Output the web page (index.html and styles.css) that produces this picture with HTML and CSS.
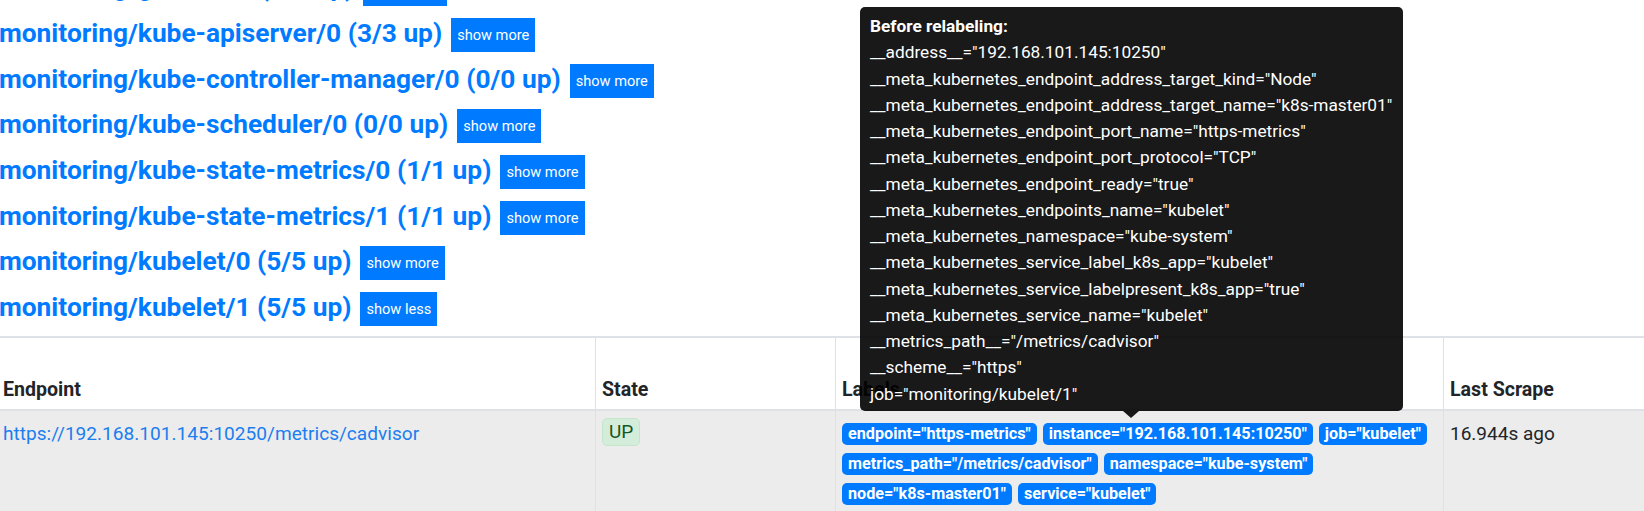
FILE: index.html
```html
<!DOCTYPE html>
<html lang="en">
<head>
<meta charset="utf-8">
<title>Targets</title>
<link rel="stylesheet" href="styles.css">
</head>
<body>
<div class="page">
  <div class="pools">
    <h3 class="pool"><a class="pool-link" href="#grafana">monitoring/grafana/0 (1/1 up)</a><button class="toggle">show more</button></h3>
    <h3 class="pool"><a class="pool-link" href="#apiserver">monitoring/kube-apiserver/0 (3/3 up)</a><button class="toggle">show more</button></h3>
    <h3 class="pool"><a class="pool-link" href="#cm">monitoring/kube-controller-manager/0 (0/0 up)</a><button class="toggle">show more</button></h3>
    <h3 class="pool"><a class="pool-link" href="#sched">monitoring/kube-scheduler/0 (0/0 up)</a><button class="toggle">show more</button></h3>
    <h3 class="pool"><a class="pool-link" href="#ksm0">monitoring/kube-state-metrics/0 (1/1 up)</a><button class="toggle">show more</button></h3>
    <h3 class="pool"><a class="pool-link" href="#ksm1">monitoring/kube-state-metrics/1 (1/1 up)</a><button class="toggle">show more</button></h3>
    <h3 class="pool"><a class="pool-link" href="#kubelet0">monitoring/kubelet/0 (5/5 up)</a><button class="toggle">show more</button></h3>
    <h3 class="pool"><a class="pool-link" href="#kubelet1">monitoring/kubelet/1 (5/5 up)</a><button class="toggle">show less</button></h3>
  </div>

  <div class="targets">
    <div class="cell th">Endpoint</div>
    <div class="cell th">State</div>
    <div class="cell th">Labels</div>
    <div class="cell th">Last Scrape</div>
    <div class="cell th">Scrape Duration</div>
    <div class="cell th">Error</div>

    <div class="cell td td-text"><a class="endpoint" href="#">https://192.168.101.145:10250/metrics/cadvisor</a></div>
    <div class="cell td"><span class="health">UP</span></div>
    <div class="cell td">
      <div class="labels">
        <span class="label">endpoint="https-metrics"</span>
        <span class="label">instance="192.168.101.145:10250"</span>
        <span class="label">job="kubelet"</span>
        <span class="label">metrics_path="/metrics/cadvisor"</span>
        <span class="label">namespace="kube-system"</span>
        <span class="label">node="k8s-master01"</span>
        <span class="label">service="kubelet"</span>
      </div>
    </div>
    <div class="cell td td-text">16.944s ago</div>
    <div class="cell td td-text">22.1ms</div>
    <div class="cell td"></div>
  </div>

  <div class="tooltip">
    <b>Before relabeling:</b><br>
    __address__="192.168.101.145:10250"<br>
    __meta_kubernetes_endpoint_address_target_kind="Node"<br>
    __meta_kubernetes_endpoint_address_target_name="k8s-master01"<br>
    __meta_kubernetes_endpoint_port_name="https-metrics"<br>
    __meta_kubernetes_endpoint_port_protocol="TCP"<br>
    __meta_kubernetes_endpoint_ready="true"<br>
    __meta_kubernetes_endpoints_name="kubelet"<br>
    __meta_kubernetes_namespace="kube-system"<br>
    __meta_kubernetes_service_label_k8s_app="kubelet"<br>
    __meta_kubernetes_service_labelpresent_k8s_app="true"<br>
    __meta_kubernetes_service_name="kubelet"<br>
    __metrics_path__="/metrics/cadvisor"<br>
    __scheme__="https"<br>
    job="monitoring/kubelet/1"
  </div>
</div>
</body>
</html>
```

FILE: styles.css
```css
html, body {
  margin: 0;
  padding: 0;
}
body {
  width: 1644px;
  height: 511px;
  overflow: hidden;
  background: #fff;
  color: #212529;
  font-family: Roboto, "Noto Sans", sans-serif;
  font-size: 19px;
  line-height: 30px;
  position: relative;
}
.page {
  margin-left: -3px;
}
.pools {
  display: flex;
  flex-direction: column;
  gap: 11.67px;
  margin-top: -27.67px;
  margin-bottom: 10px;
  padding-left: 2px;
}
.pool {
  display: flex;
  align-items: baseline;
  gap: 9px;
  height: 34px;
  margin: 0;
  font-size: 26.3px;
  font-weight: 700;
  line-height: 20px;
}
.pool-link {
  color: #007bff;
  text-decoration: none;
  white-space: nowrap;
  position: relative;
  top: 2px;
}
.toggle {
  font-family: inherit;
  font-size: 14.6px;
  font-weight: 400;
  line-height: 24px;
  padding: 5px 6px;
  border: 0;
  border-radius: 0;
  background: #007bff;
  color: #fff;
  white-space: nowrap;
}
.targets {
  display: grid;
  grid-template-columns: 599px 240px 608px 300px 260px 200px;
  grid-template-rows: 73px auto;
  border-top: 2px solid #dee2e6;
  width: max-content;
}
.cell {
  box-sizing: border-box;
  padding: 6px;
  border-right: 1px solid #dee2e6;
}
.th {
  display: flex;
  align-items: flex-end;
  padding-bottom: 4px;
  font-size: 19.6px;
  font-weight: 700;
  border-bottom: 2px solid #dee2e6;
}
.td {
  background: #ececec;
  min-height: 110px;
}
.td-text {
  padding-top: 8px;
}
.endpoint {
  color: #1a7ef0;
  text-decoration: none;
  font-size: 19.1px;
}
.health {
  display: inline-block;
  padding: 3px 6px;
  line-height: 20px;
  background: #d4edda;
  color: #155724;
  border: 1px solid #c3e6cb;
  border-radius: 5px;
}
.labels {
  display: flex;
  flex-wrap: wrap;
  column-gap: 6px;
  row-gap: 8px;
  margin-top: 6px;
}
.label {
  display: inline-block;
  padding: 3px 6px;
  font-size: 16.2px;
  line-height: 16px;
  font-weight: 700;
  color: #fff;
  background: #007bff;
  border-radius: 5px;
  white-space: nowrap;
}
.tooltip {
  position: absolute;
  left: 860px;
  top: 7px;
  width: 543px;
  box-sizing: border-box;
  padding: 6px 10px 4px;
  background: rgba(0, 0, 0, 0.9);
  color: #fff;
  font-size: 17.25px;
  line-height: 26.25px;
  border-radius: 5px;
  white-space: nowrap;
}
.tooltip::after {
  content: "";
  position: absolute;
  top: 100%;
  left: 263px;
  border-top: 7px solid rgba(0, 0, 0, 0.9);
  border-left: 8px solid transparent;
  border-right: 8px solid transparent;
}
```
